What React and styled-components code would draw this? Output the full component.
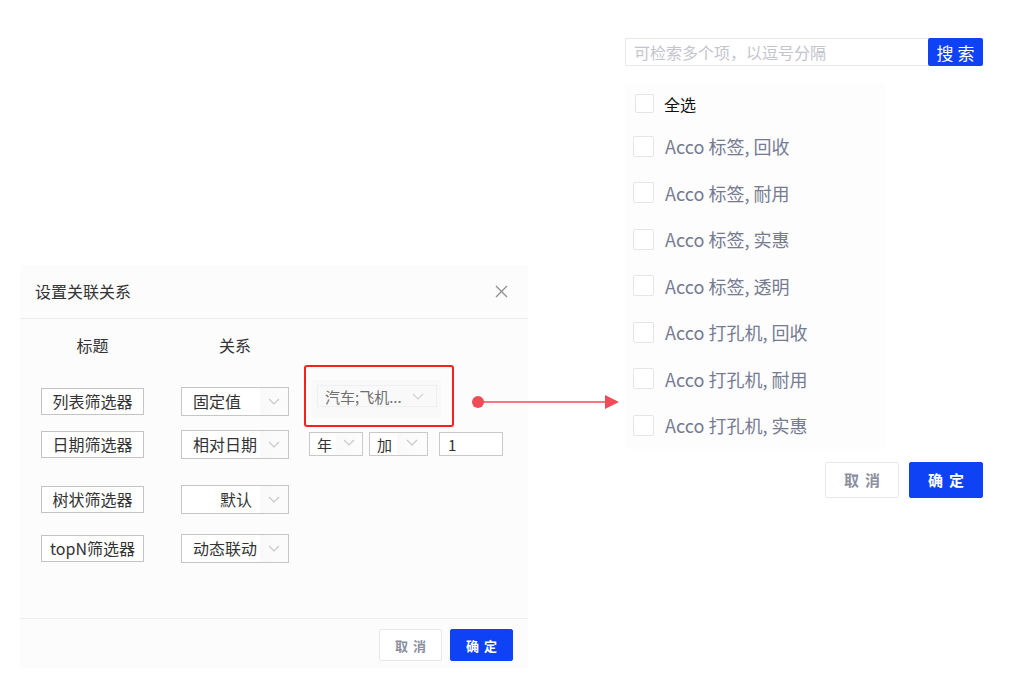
import React from "react";
import styled, { createGlobalStyle } from "styled-components";

const GlobalStyle = createGlobalStyle`
  html, body { margin: 0; padding: 0; background: #ffffff; }
  body { font-family: "Noto Sans CJK SC", "Noto Sans", sans-serif; color: #333; }
  * { box-sizing: border-box; }
`;

const BLUE = "#0f41f5";

const Page = styled.div`
  position: relative;
  width: 1035px;
  height: 686px;
  display: flex;
  align-items: flex-start;
  overflow: hidden;
`;

/* ---------- Left dialog ---------- */
const Dialog = styled.div`
  margin-left: 20px;
  margin-top: 265px;
  width: 508px;
  background: #fcfcfd;
  display: flex;
  flex-direction: column;
`;

const DialogHeader = styled.div`
  height: 54px;
  display: flex;
  align-items: center;
  justify-content: space-between;
  padding: 0 20px 0 15px;
  border-bottom: 1px solid #ececf1;
`;

const DialogTitle = styled.div`
  font-size: 16px;
  color: #333;
  margin-top: -2px;
`;

const CloseBtn = styled.div`
  width: 13px;
  height: 13px;
  display: flex;
  align-items: center;
  justify-content: center;
`;

const DialogBody = styled.div`
  height: 299px;
  padding: 16px 0 0 21px;
  display: flex;
  flex-direction: column;
`;

const Row = styled.div`
  display: flex;
  align-items: center;
  height: ${(p) => p.$h || 28}px;
  margin-top: ${(p) => p.$mt || 0}px;
`;

const ColHead = styled.div`
  width: ${(p) => p.$w}px;
  margin-left: ${(p) => p.$ml || 0}px;
  text-align: center;
  font-size: 16px;
  line-height: 20px;
  color: #333;
`;

const TitleBox = styled.div`
  width: 103px;
  height: 27px;
  border: 1px solid #c4c4c4;
  background: #fff;
  display: flex;
  align-items: center;
  justify-content: center;
  font-size: 16px;
  color: #333;
  white-space: nowrap;
`;

const RelSelect = styled.div`
  width: 108px;
  height: 29px;
  margin-left: 37px;
  border: 1px solid #c6c6c6;
  background: #fff;
  display: flex;
  align-items: stretch;
`;

const RelText = styled.div`
  flex: 1;
  display: flex;
  align-items: center;
  padding-left: ${(p) => p.$indent || 11}px;
  font-size: 16px;
  color: #333;
  white-space: nowrap;
`;

const ChevronArea = styled.div`
  width: ${(p) => p.$w || 28}px;
  display: flex;
  justify-content: center;
  align-items: ${(p) => (p.$top ? "flex-start" : "center")};
  padding-top: ${(p) => (p.$top ? 6 : 0)}px;
  background: linear-gradient(90deg, #f9f9f9, #fcfcfc);
`;

const Extras = styled.div`
  margin-left: 20px;
  display: flex;
  align-items: center;
  height: 100%;
`;

const Highlight = styled.div`
  position: relative;
  align-self: flex-start;
  margin-left: 2px;
  margin-top: -7px;
  padding: 5px 4px 10px 6px;
  background: #f9f9fa;
`;

const RedFrame = styled.div`
  position: absolute;
  left: -7px;
  top: -15px;
  width: 150px;
  height: 62px;
  border: 2.5px solid #f8201a;
  border-radius: 3px;
  pointer-events: none;
`;

const InnerSelect = styled.div`
  width: 120px;
  height: 22px;
  border: 1px solid #efeff1;
  background: #f9f9fa;
  display: flex;
  align-items: center;
  justify-content: space-between;
  padding: 0 12px 0 7px;
  font-size: 15px;
  color: #6f6f6f;
  white-space: nowrap;
`;

const SmallSelect = styled.div`
  width: ${(p) => p.$w}px;
  height: 24px;
  margin-left: ${(p) => p.$ml || 0}px;
  border: 1px solid #c9c9c9;
  background: #fff;
  display: flex;
  align-items: stretch;
`;

const SmallText = styled.div`
  flex: 1;
  display: flex;
  align-items: center;
  padding-left: 7px;
  font-size: 15px;
  color: #333;
`;

const NumInput = styled.div`
  width: 64px;
  height: 24px;
  margin-left: 11px;
  border: 1px solid #c9c9c9;
  background: #fff;
  display: flex;
  align-items: center;
  padding-left: 8px;
  font-size: 15px;
  color: #333;
`;

const DialogFooter = styled.div`
  height: 50px;
  border-top: 1px solid #ececf1;
  display: flex;
  justify-content: flex-end;
  align-items: flex-start;
  padding: 10px 15px 0 0;
  gap: 8px;
`;

const Btn = styled.button`
  width: ${(p) => p.$w}px;
  height: ${(p) => p.$h}px;
  border-radius: 2px;
  font-family: inherit;
  font-size: ${(p) => p.$fs}px;
  font-weight: 700;
  letter-spacing: ${(p) => p.$ls}px;
  text-indent: ${(p) => p.$ls}px;
  padding: 0;
  cursor: pointer;
  border: 1px solid ${(p) => (p.$primary ? BLUE : "#e6e7ec")};
  background: ${(p) => (p.$primary ? BLUE : "#fff")};
  color: ${(p) => (p.$primary ? "#fff" : "#8b8fa0")};
`;

/* ---------- Right panel ---------- */
const Panel = styled.div`
  margin-left: 97px;
  margin-top: 38px;
  width: 358px;
  display: flex;
  flex-direction: column;
`;

const SearchRow = styled.div`
  display: flex;
  height: 28px;
`;

const SearchInput = styled.div`
  width: 303px;
  height: 28px;
  border: 1px solid #e6e7ec;
  border-right: none;
  border-radius: 2px 0 0 2px;
  background: #fff;
  display: flex;
  align-items: center;
  padding-left: 8px;
  font-size: 16px;
  color: #c3c5cd;
  white-space: nowrap;
`;

const SearchBtn = styled.div`
  width: 55px;
  height: 28px;
  background: ${BLUE};
  border-radius: 2px;
  color: #fff;
  font-size: 17px;
  letter-spacing: 4px;
  text-indent: 4px;
  display: flex;
  align-items: center;
  justify-content: center;
`;

const List = styled.div`
  margin-top: 18px;
  width: 260px;
  background: #fdfdfe;
  display: flex;
  flex-direction: column;
`;

const CheckRow = styled.div`
  display: flex;
  align-items: center;
  height: ${(p) => p.$h}px;
  padding-left: ${(p) => p.$pl}px;
`;

const Box = styled.span`
  width: ${(p) => p.$s}px;
  height: ${(p) => p.$s}px;
  border: 1px solid #e4e5ea;
  border-radius: 2px;
  background: #fff;
  flex-shrink: 0;
`;

const CheckLabel = styled.span`
  margin-left: ${(p) => p.$ml}px;
  font-size: ${(p) => p.$fs}px;
  color: ${(p) => p.$c};
  white-space: nowrap;
`;

const PanelFooter = styled.div`
  margin-top: 13px;
  display: flex;
  justify-content: flex-end;
  gap: 10px;
`;

const ArrowWrap = styled.svg`
  position: absolute;
  left: 472px;
  top: 394px;
`;

const Chevron = ({ color = "#c8c8c8" }) => (
  <svg width="12" height="7" viewBox="0 0 12 7">
    <polyline points="1,1 6,6 11,1" fill="none" stroke={color} strokeWidth="1.2" />
  </svg>
);

const rows = [
  { title: "列表筛选器", rel: "固定值", mt: 32 },
  { title: "日期筛选器", rel: "相对日期", mt: 15 },
  { title: "树状筛选器", rel: "默认", mt: 27, indent: 38 },
  { title: "topN筛选器", rel: "动态联动", mt: 21 },
];

const items = [
  "Acco 标签, 回收",
  "Acco 标签, 耐用",
  "Acco 标签, 实惠",
  "Acco 标签, 透明",
  "Acco 打孔机, 回收",
  "Acco 打孔机, 耐用",
  "Acco 打孔机, 实惠",
];

export default function App() {
  return (
    <>
      <GlobalStyle />
      <Page>
        <Dialog>
          <DialogHeader>
            <DialogTitle>设置关联关系</DialogTitle>
            <CloseBtn>
              <svg width="13" height="13" viewBox="0 0 13 13">
                <path d="M1 1 L12 12 M12 1 L1 12" stroke="#8e8e8e" strokeWidth="1.3" />
              </svg>
            </CloseBtn>
          </DialogHeader>
          <DialogBody>
            <Row $h={20}>
              <ColHead $w={103}>标题</ColHead>
              <ColHead $w={108} $ml={37}>关系</ColHead>
            </Row>
            {rows.map((r, i) => (
              <Row key={r.title} $mt={r.mt}>
                <TitleBox>{r.title}</TitleBox>
                <RelSelect>
                  <RelText $indent={r.indent}>{r.rel}</RelText>
                  <ChevronArea>
                    <Chevron />
                  </ChevronArea>
                </RelSelect>
                {i === 0 && (
                  <Extras>
                    <Highlight>
                      <InnerSelect>
                        <span>汽车;飞机...</span>
                        <Chevron color="#d2d2d4" />
                      </InnerSelect>
                      <RedFrame />
                    </Highlight>
                  </Extras>
                )}
                {i === 1 && (
                  <Extras>
                    <SmallSelect $w={54}>
                      <SmallText>年</SmallText>
                      <ChevronArea $w={26} $top>
                        <Chevron />
                      </ChevronArea>
                    </SmallSelect>
                    <SmallSelect $w={59} $ml={6}>
                      <SmallText>加</SmallText>
                      <ChevronArea $w={30} $top>
                        <Chevron />
                      </ChevronArea>
                    </SmallSelect>
                    <NumInput>1</NumInput>
                  </Extras>
                )}
              </Row>
            ))}
          </DialogBody>
          <DialogFooter>
            <Btn $w={63} $h={32} $fs={13} $ls={5}>取消</Btn>
            <Btn $w={63} $h={32} $fs={13} $ls={5} $primary>确定</Btn>
          </DialogFooter>
        </Dialog>

        <Panel>
          <SearchRow>
            <SearchInput>可检索多个项，以逗号分隔</SearchInput>
            <SearchBtn>搜索</SearchBtn>
          </SearchRow>
          <List>
            <CheckRow $h={39} $pl={10}>
              <Box $s={19} />
              <CheckLabel $ml={10} $fs={16} $c="#111">全选</CheckLabel>
            </CheckRow>
            {items.map((t) => (
              <CheckRow key={t} $h={46.5} $pl={8}>
                <Box $s={21} />
                <CheckLabel $ml={11} $fs={18} $c="#767b91">{t}</CheckLabel>
              </CheckRow>
            ))}
          </List>
          <PanelFooter>
            <Btn $w={74} $h={36} $fs={15} $ls={6}>取消</Btn>
            <Btn $w={74} $h={36} $fs={15} $ls={6} $primary>确定</Btn>
          </PanelFooter>
        </Panel>

        <ArrowWrap width="150" height="16" viewBox="0 0 150 16">
          <circle cx="6" cy="8" r="6" fill="#f04b59" />
          <line x1="6" y1="8" x2="136" y2="8" stroke="#f04b59" strokeWidth="1.6" />
          <polygon points="133,1 147,8 133,15" fill="#f04b59" />
        </ArrowWrap>
      </Page>
    </>
  );
}
